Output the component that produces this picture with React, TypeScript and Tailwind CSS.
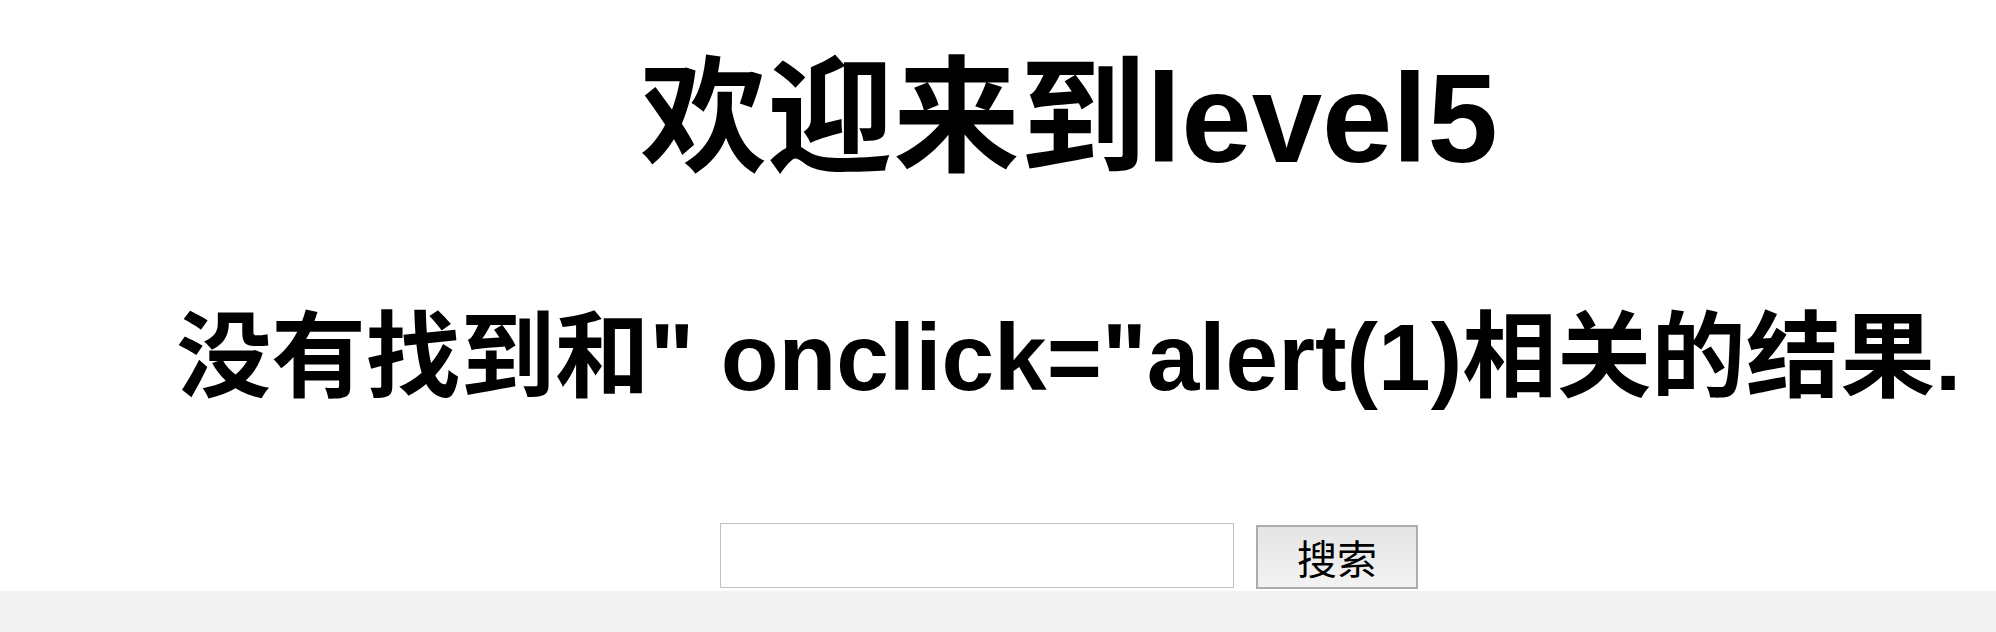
import React from "react";

export default function App() {
  const font = { fontFamily: '"Liberation Sans", "Noto Sans CJK SC", sans-serif' };
  return (
    <div className="w-[1996px] h-[632px] flex flex-col bg-[#f2f2f2] overflow-hidden" style={font}>
      <div className="h-[591px] bg-white pl-[142px] flex flex-col items-center text-black">
        <h1 className="mt-[55px] text-[126.5px] leading-[126px] font-bold whitespace-nowrap">欢迎来到level5</h1>
        <h2 className="mt-[129px] text-[94.6px] leading-[94px] font-bold whitespace-nowrap">
          没有找到和" onclick="alert(1)相关的结果.
        </h2>
        <form className="mt-[119px] flex items-start" onSubmit={(e) => e.preventDefault()}>
          <input
            type="text"
            className="w-[514px] h-[65px] border border-[#c0c0c0] bg-white outline-none"
          />
          <button
            type="submit"
            className="ml-[22px] mt-[2px] w-[162px] h-[64px] border-2 border-[#acacac] bg-gradient-to-b from-[#e5e5e5] to-[#f3f3f3] text-[40px] leading-none text-black flex items-center justify-center"
            style={{ fontFamily: '"Noto Sans CJK SC", sans-serif' }}
          >
            搜索
          </button>
        </form>
      </div>
      <div className="flex-1 bg-[#f2f2f2]" />
    </div>
  );
}
